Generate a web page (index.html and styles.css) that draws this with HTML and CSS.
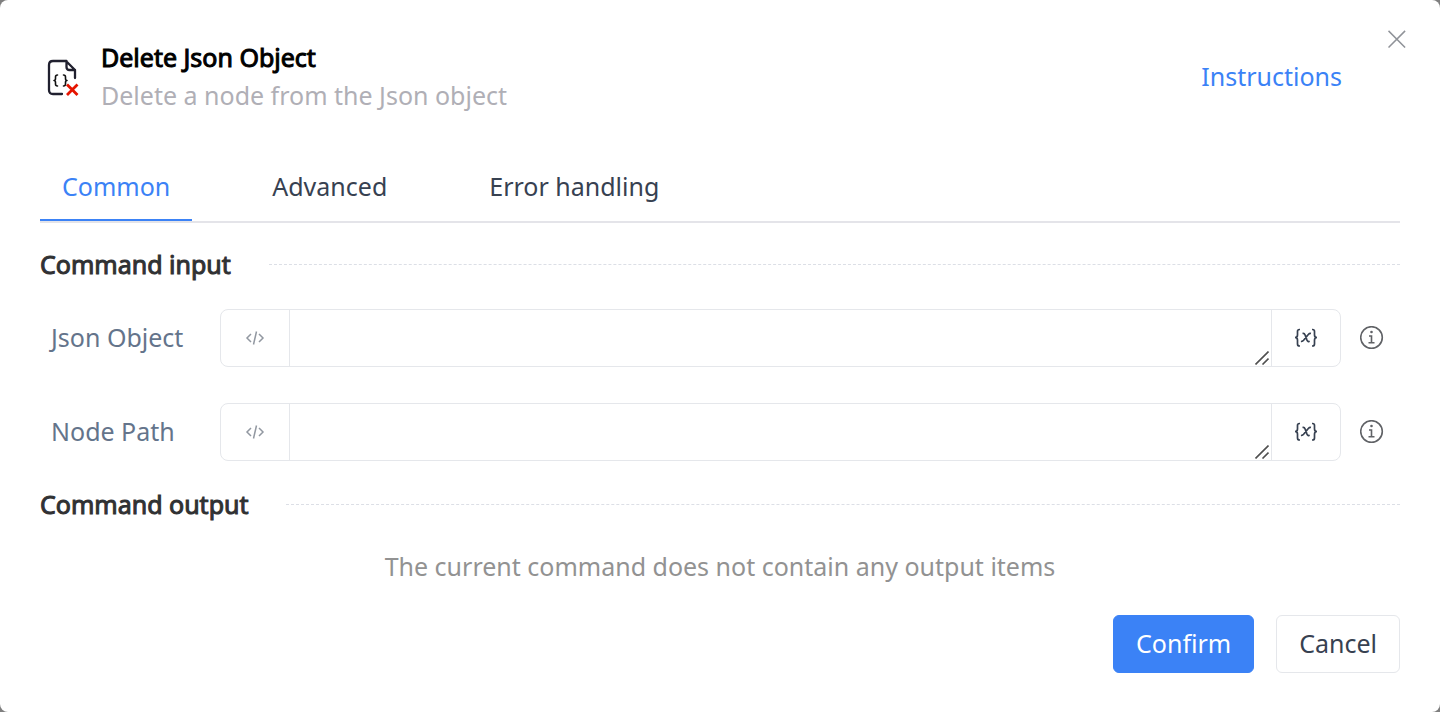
FILE: index.html
```html
<!DOCTYPE html>
<html lang="en">
<head>
<meta charset="utf-8">
<title>Delete Json Object</title>
<link rel="stylesheet" href="styles.css">
</head>
<body>
<svg class="symbols" aria-hidden="true">
  <symbol id="code" viewBox="0 0 20 16"><path d="M6 4 2 8l4 4M14 4l4 4-4 4M11.500 1.500 8.500 14.500"/></symbol>
  <symbol id="grip" viewBox="0 0 14 14"><path d="M.5 13.500 13.500.5M7.500 13.500l6-6"/></symbol>
  <symbol id="variable" viewBox="0 0 24 20"><path d="M6 1.500H5.500Q3.500 1.500 3.500 3.500V7Q3.500 9.500 1 9.500Q3.500 9.500 3.500 12v4Q3.500 18 5.500 18H6M18 1.500h.5q2 0 2 2V7q0 2.500 2.500 2.500-2.500 0-2.500 2.500v4q0 2-2 2H18"/><path d="M8.500 5.500q1.800-.5 2.500 1.200l2 5.400q.8 2 2.700 1.200M17 5.500q-1.400-.4-2.700 1l-4.700 5.800q-1.200 1.400-2.600.9"/></symbol>
  <symbol id="info" viewBox="0 0 24 24"><circle cx="11.500" cy="11.500" r="10.800"/><path d="M9 10h2.500v6.500M8.500 16.700h6"/><circle class="info-dot" cx="11.500" cy="6" r="1.300"/></symbol>
</svg>
<main class="dialog" role="dialog" aria-labelledby="title">
  <button class="close" type="button" aria-label="Close"><svg width="18" height="18" viewBox="0 0 18 18"><path d="m.5.900 16.600 16.600M17.100.900.5 17.500"/></svg></button>
  <header class="header">
    <svg class="file-icon" width="34" height="42" viewBox="0 0 34 42" aria-hidden="true">
      <path class="file-line" d="M15 39H6q-4 0-4-4V10q0-4 4-4h13l9 9v8M19.500 6v6q0 3 3 3H28"/>
      <path class="file-brace" d="M10.500 20q-2 0-2 2v1.500q0 2-1.500 2 1.500 0 1.500 2V29q0 2 2 2M16.500 20q2 0 2 2v1.500q0 2 1.500 2-1.500 0-1.500 2V29q0 2-2 2"/>
      <path class="file-delete" d="m20 29.500 10.500 10.500M30.500 29.500 20 40"/>
    </svg>
    <div class="heading">
      <h1 class="title" id="title">Delete Json Object</h1>
      <p class="subtitle">Delete a node from the Json object</p>
    </div>
    <a class="instructions" href="#instructions">Instructions</a>
  </header>
  <nav class="tabs" role="tablist">
    <button class="tab active" type="button" role="tab" aria-selected="true">Common</button>
    <button class="tab" type="button" role="tab" aria-selected="false">Advanced</button>
    <button class="tab" type="button" role="tab" aria-selected="false">Error handling</button>
  </nav>
  <h2 class="section">Command input</h2>
  <div class="fields">
    <div class="field">
      <label class="label" for="json-object">Json Object</label>
      <div class="group">
        <button class="addon mode" type="button" aria-label="Code mode"><svg width="20" height="16"><use href="#code"/></svg></button>
        <div class="entry"><textarea class="textarea" id="json-object" rows="1"></textarea><svg class="grip" width="14" height="14"><use href="#grip"/></svg></div>
        <button class="addon variable" type="button" aria-label="Insert variable"><svg width="24" height="20"><use href="#variable"/></svg></button>
      </div>
      <button class="info" type="button" aria-label="About Json Object"><svg width="24" height="24"><use href="#info"/></svg></button>
    </div>
    <div class="field">
      <label class="label" for="node-path">Node Path</label>
      <div class="group">
        <button class="addon mode" type="button" aria-label="Code mode"><svg width="20" height="16"><use href="#code"/></svg></button>
        <div class="entry"><textarea class="textarea" id="node-path" rows="1"></textarea><svg class="grip" width="14" height="14"><use href="#grip"/></svg></div>
        <button class="addon variable" type="button" aria-label="Insert variable"><svg width="24" height="20"><use href="#variable"/></svg></button>
      </div>
      <button class="info" type="button" aria-label="About Node Path"><svg width="24" height="24"><use href="#info"/></svg></button>
    </div>
  </div>
  <h2 class="section">Command output</h2>
  <p class="empty">The current command does not contain any output items</p>
  <footer class="actions">
    <button class="button primary" type="button">Confirm</button>
    <button class="button" type="button">Cancel</button>
  </footer>
</main>
</body>
</html>
```
FILE: styles.css
```css
* { box-sizing: border-box; }
body {
  margin: 0;
  background: #7f7f7f;
  color: #374151;
  font: 25px/38px "Noto Sans", "Open Sans", sans-serif;
}
button { padding: 0; border: 0; background: none; color: inherit; font: inherit; cursor: pointer; }
svg { display: block; fill: none; stroke: currentColor; }
h1, h2, p { margin: 0; }
.symbols { position: absolute; width: 0; height: 0; }
.dialog {
  position: relative;
  min-height: 100vh;
  padding: 38px 40px;
  border-radius: 8px;
  background: #fff;
}
.close { position: absolute; top: 30px; right: 34px; color: #909399; }
.close svg { stroke-width: 1.500; }
.header { display: flex; align-items: center; gap: 20px; padding: 0 58px 0 7px; }
.file-icon { stroke-linecap: round; stroke-linejoin: round; }
.file-line { stroke: #20202f; stroke-width: 2.300; }
.file-brace { stroke: #111; stroke-width: 1.600; }
.file-delete { stroke: #e51400; stroke-width: 2.800; stroke-linecap: butt; }
.heading { flex: 1; }
.title, .section { font-size: 25px; font-weight: 400; -webkit-text-stroke: 1px currentColor; }
.title { color: #000; }
.subtitle { color: #b0afb6; }
.instructions { color: #3b82f6; text-decoration: none; }
.tabs { display: flex; gap: 58px; margin-top: 38px; border-bottom: 2px solid #e4e4e9; }
.tab { height: 69px; padding: 0 22px; border-bottom: 2px solid transparent; }
.tab.active { border-color: #3b82f6; color: #3b82f6; }
.section { display: flex; align-items: center; gap: 38px; color: #303133; }
.section::after { content: ""; flex: 1; border-top: 1px dashed #dcdfe6; }
.tabs + .section { margin-top: 22px; }
.fields { display: grid; gap: 36px; margin: 26px 0 24px; }
.field { display: grid; grid-template-columns: 169px 1fr 24px; align-items: center; padding: 0 16px 0 11px; }
.label { padding-bottom: 2px; color: #64748b; }
.group { display: flex; height: 58px; margin-right: 19px; border: 1px solid #e5e7eb; border-radius: 8px; overflow: hidden; }
.addon { display: grid; place-items: center; width: 69px; }
.mode { border-right: 1px solid #e5e7eb; color: #9298a1; }
.mode svg { stroke-width: 1.500; }
.variable { border-left: 1px solid #e5e7eb; }
.variable svg { stroke-width: 1.700; }
.entry { position: relative; flex: 1; }
.textarea { display: block; width: 100%; height: 56px; padding: 8px 20px; border: 0; outline: 0; background: none; color: inherit; font: inherit; resize: none; }
.grip { position: absolute; right: 2px; bottom: 1px; color: #505050; stroke-width: 1.600; pointer-events: none; }
.info { color: #606266; stroke-width: 1.600; }
.info-dot { fill: currentColor; stroke: none; }
.empty { margin-top: 24px; color: #929292; text-align: center; }
.actions { display: flex; justify-content: flex-end; gap: 22px; margin-top: 30px; }
.button { height: 58px; padding: 0 22px 2px; border: 1px solid #e5e7eb; border-radius: 6px; }
.primary { border-color: #3b82f6; background: #3b82f6; color: #fff; }
```
